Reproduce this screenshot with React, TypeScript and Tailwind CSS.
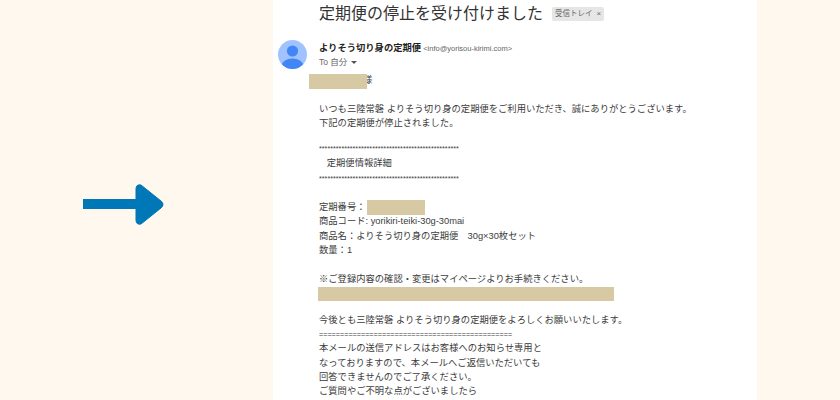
import React from "react";

const font = "font-['Liberation_Sans','Noto_Sans_CJK_JP',sans-serif]";

const Line: React.FC<{ h?: string; children?: React.ReactNode }> = ({ children }) => (
  <div className="h-[14.3px] leading-[14.3px] whitespace-pre">{children}</div>
);

const Blank = () => <div className="h-[14.3px]" />;

const App: React.FC = () => {
  return (
    <div className={`flex w-[840px] h-[400px] overflow-hidden bg-[#fff8ef] ${font}`}>
      {/* Arrow */}
      <div className="w-[273px] flex items-center pl-[83px] pb-[-10px]">
        <svg width="82" height="42" viewBox="0 0 82 42" className="mt-[10px]">
          <rect x="0" y="15" width="54" height="10" fill="#0077b6" />
          <path
            d="M53 5 Q53 0 58 1 L78 17 Q82 20.5 78 24 L58 40 Q53 41 53 36 Z"
            fill="#0077b6"
            stroke="#0077b6"
            strokeLinejoin="round"
          />
        </svg>
      </div>

      {/* Email */}
      <div className="w-[484px] h-full bg-white flex flex-col overflow-hidden text-[#3c3c3c]">
        <div className="flex items-center h-[28px] pl-[46px] gap-[9px]">
          <span className="text-[16px] text-[#333]">定期便の停止を受け付けました</span>
          <span className="flex items-center gap-[4px] h-[14px] px-[3px] rounded-[2px] bg-[#e6e6e6] text-[7.5px] text-[#666]">
            受信トレイ
            <span className="text-[8px]">×</span>
          </span>
        </div>

        <div className="flex mt-[12px] pl-[5px] gap-[12px]">
          <svg width="29" height="29" viewBox="0 0 29 29" className="shrink-0">
            <defs>
              <clipPath id="avatar">
                <circle cx="14.5" cy="14.5" r="14.5" />
              </clipPath>
            </defs>
            <circle cx="14.5" cy="14.5" r="14.5" fill="#a0c3ff" />
            <g clipPath="url(#avatar)">
              <circle cx="14.5" cy="11" r="5.6" fill="#4285f4" />
              <ellipse cx="14.5" cy="25" rx="10.5" ry="6.5" fill="#4285f4" />
            </g>
          </svg>
          <div className="flex flex-col text-[9.3px] pt-[1px]">
            <div className="h-[14px] leading-[14px] whitespace-pre">
              <span className="font-bold text-[#222]">よりそう切り身の定期便</span>
              <span className="text-[7.5px] text-[#666]"> &lt;info@yorisou-kirimi.com&gt;</span>
            </div>
            <div className="flex items-center h-[15px] text-[#666] text-[8.5px] gap-[4px]">
              To 自分
              <span className="w-0 h-0 border-x-[3px] border-x-transparent border-t-[3px] border-t-[#555]" />
            </div>
          </div>
        </div>

        {/* Body */}
        <div className="relative mt-[3px] pl-[46px] text-[9.3px]">
          <div className="absolute left-[36px] top-[1px] w-[58px] h-[15px] bg-[#d6c9a3]" />
          <Line>{"                 様"}</Line>
          <Blank />
          <Line>いつも三陸常磐 よりそう切り身の定期便をご利用いただき、誠にありがとうございます。</Line>
          <Line>下記の定期便が停止されました。</Line>
          <div className="h-[11px]" />
          <Line>
            <span className="text-[7.2px]">{"*".repeat(50)}</span>
          </Line>
          <div className="h-[1px]" />
          <Line>{"   定期便情報詳細"}</Line>
          <Line>
            <span className="text-[7.2px]">{"*".repeat(50)}</span>
          </Line>
          <div className="h-[15px]" />
          <div className="relative">
            <div className="absolute left-[48px] top-0 w-[58px] h-[15px] bg-[#d6c9a3]" />
            <Line>定期番号：</Line>
          </div>
          <Line>商品コード: yorikiri-teiki-30g-30mai</Line>
          <Line>商品名：よりそう切り身の定期便　30g×30枚セット</Line>
          <Line>数量：1</Line>
          <Blank />
          <Line>※ご登録内容の確認・変更はマイページよりお手続きください。</Line>
          <div className="ml-[-1px] mt-[1px] w-[296px] h-[14px] bg-[#d6c9a3]" />
          <div className="h-[12px]" />
          <Line>今後とも三陸常磐 よりそう切り身の定期便をよろしくお願いいたします。</Line>
          <Line>
            <span className="text-[7.2px]">{"=".repeat(46)}</span>
          </Line>
          <Line>本メールの送信アドレスはお客様へのお知らせ専用と</Line>
          <Line>なっておりますので、本メールへご返信いただいても</Line>
          <Line>回答できませんのでご了承ください。</Line>
          <Line>ご質問やご不明な点がございましたら</Line>
        </div>
      </div>

      <div className="flex-1" />
    </div>
  );
};

export default App;
